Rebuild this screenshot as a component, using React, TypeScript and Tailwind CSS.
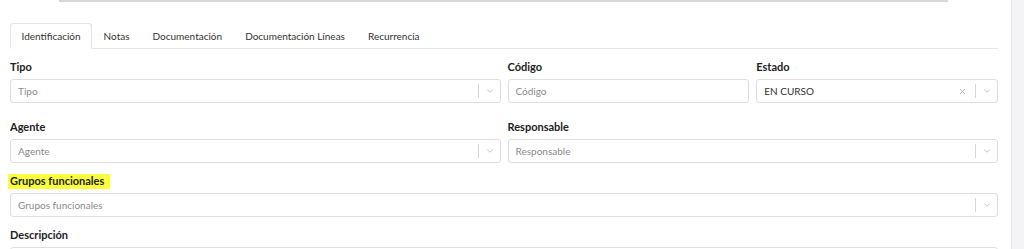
import { X, ChevronDown } from "lucide-react";

const tabs = ["Identificación", "Notas", "Documentación", "Documentación Líneas", "Recurrencia"];

function Label({ children, highlight }: { children: string; highlight?: boolean }) {
  return (
    <div className="flex h-3 items-center">
      <span
        className={
          "text-[11px] font-bold leading-3 text-[#222] " +
          (highlight ? "-ml-0.5 bg-[#fbff3a] pl-0.5 pr-[6px] pt-px pb-0.5" : "")
        }
      >
        {children}
      </span>
    </div>
  );
}

function SelectBox({ placeholder, value, clearable }: { placeholder?: string; value?: string; clearable?: boolean }) {
  return (
    <div className="mt-1.5 flex h-6 items-center rounded-[3px] border border-[#dedde3] bg-white pl-[7px]">
      <span className={"flex-1 truncate text-[10px] " + (value ? "text-[#333]" : "text-[#8a8a8a]")}>
        {value ?? placeholder}
      </span>
      {clearable && <X className="mr-2 h-[9px] w-[9px] text-[#b3b3b3]" strokeWidth={2.5} />}
      <div className="h-[14px] w-px bg-[#d6d6d6]" />
      <ChevronDown className="ml-[6px] mr-[5px] h-[10px] w-[10px] text-[#b8b8b8]" strokeWidth={2} />
    </div>
  );
}

function TextBox({ placeholder }: { placeholder: string }) {
  return (
    <div className="mt-1.5 flex h-6 items-center rounded-[3px] border border-[#dedde3] bg-white pl-[7px]">
      <span className="text-[10px] text-[#8a8a8a]">{placeholder}</span>
    </div>
  );
}

export default function App() {
  return (
    <div className="flex h-[249px] w-full overflow-hidden bg-white font-['Lato',sans-serif]">
      <div className="flex-1">
        <div className="ml-[59px] h-[2px] w-[889px] bg-[#d7d7d7]" />
        <div className="pl-[10px] pr-[13px]">
          <div className="mt-[21px] flex border-b border-[#e4e4e8]">
            {tabs.map((t, i) => (
              <div
                key={t}
                className={
                  "-mb-px flex h-[26px] items-center px-[10.5px] text-[10px] text-[#333] " +
                  (i === 0 ? "rounded-t-[3px] border border-b-white border-[#e4e4e8] bg-white" : "border border-transparent")
                }
              >
                {t}
              </div>
            ))}
          </div>

          <div className="mt-[12px] grid grid-cols-4 gap-x-[7px]">
            <div className="col-span-2">
              <Label>Tipo</Label>
              <SelectBox placeholder="Tipo" />
            </div>
            <div>
              <Label>Código</Label>
              <TextBox placeholder="Código" />
            </div>
            <div>
              <Label>Estado</Label>
              <SelectBox value="EN CURSO" clearable />
            </div>

            <div className="col-span-2 mt-[18px]">
              <Label>Agente</Label>
              <SelectBox placeholder="Agente" />
            </div>
            <div className="col-span-2 mt-[18px]">
              <Label>Responsable</Label>
              <SelectBox placeholder="Responsable" />
            </div>

            <div className="col-span-4 mt-[12px]">
              <Label highlight>Grupos funcionales</Label>
              <SelectBox placeholder="Grupos funcionales" />
            </div>

            <div className="col-span-4 mt-[12px]">
              <Label>Descripción</Label>
              <div className="mt-1.5 h-6 rounded-[3px] border border-[#dedde3] bg-white" />
            </div>
          </div>
        </div>
      </div>
      <div className="w-[13px] border-l border-[#e6e6ea] bg-[#f4f4f7]" />
    </div>
  );
}
